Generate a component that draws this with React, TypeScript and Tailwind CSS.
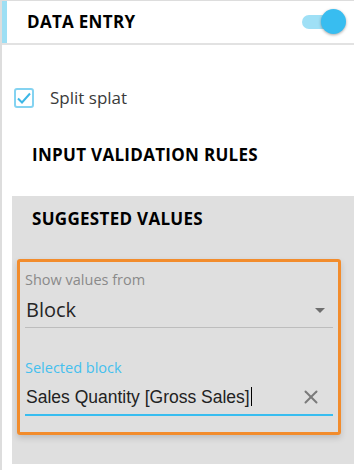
import { X } from "lucide-react";

export default function App() {
  return (
    <div className="h-[470px] w-[354px] overflow-hidden border-l-2 border-t border-[#dddddd] bg-white font-['Open_Sans',sans-serif]">
      {/* header */}
      <div className="flex h-[44px] items-center border-b-2 border-[#e2e2e2]">
        <div className="h-full w-[5px] bg-[#9ddff4]" />
        <h1 className="ml-[20px] text-[17px] font-bold leading-[24px] tracking-[0.3px] text-black">DATA ENTRY</h1>
        <div className="relative ml-auto mr-[8px] h-[26px] w-[44px]">
          <div className="absolute left-0 top-[6px] h-[14px] w-[38px] rounded-full bg-[#9fe0f6]" />
          <div className="absolute left-[19px] top-0 h-[25px] w-[25px] rounded-full bg-[#38bdf0] shadow-[0_1px_3px_rgba(0,0,0,0.35)]" />
        </div>
      </div>

      <div className="flex items-center gap-[16px] pl-[12px] pt-[41px]">
        <div className="flex h-[20px] w-[20px] items-center justify-center rounded-[3px] border-2 border-[#84d3f1]">
          <svg viewBox="0 0 16 16" className="h-[16px] w-[16px]">
            <path d="M2 8.5 L6 12.5 L14 3.5" fill="none" stroke="#3cb7e6" strokeWidth="2" />
          </svg>
        </div>
        <span className="text-[17px] leading-[24px] text-[#3a3a3a]">Split splat</span>
      </div>

      <h2 className="pl-[30px] pt-[33px] text-[17px] font-bold leading-[24px] tracking-[0.3px] text-black">INPUT VALIDATION RULES</h2>

      <div className="ml-[10px] mt-[29px] h-[268px] bg-[#dfdfdf] pl-[5px] pr-[13px] pt-[11px]">
        <h2 className="pl-[15px] text-[17px] font-bold leading-[24px] tracking-[0.3px] text-black">SUGGESTED VALUES</h2>

        <div className="mt-[28px] h-[176px] rounded-[3px] border-[3px] border-[#f28c2c] px-[5px] pt-[8px] shadow-[0_3px_6px_rgba(0,0,0,0.15)]">
          <div className="border-b border-[#bdbdbd] pb-[4px]">
            <div className="text-[14.5px] leading-[20px] text-[#8a8a8a]">Show values from</div>
            <div className="mt-[7px] flex items-center justify-between pl-[1px] pr-[8px]">
              <span className="text-[20px] leading-[26px] text-[#262626]">Block</span>
              <svg viewBox="0 0 10 5" className="h-[5px] w-[10px]">
                <path d="M0 0 L10 0 L5 5 Z" fill="#6e6e6e" />
              </svg>
            </div>
          </div>

          <div className="mt-[30px] border-b-2 border-[#38bdf0] pb-[5px]">
            <div className="text-[14.5px] leading-[20px] text-[#45c0ee]">Selected block</div>
            <div className="mt-[6px] flex items-center justify-between pl-[1px] pr-[11px]">
              <span className="font-['Liberation_Sans',Arial,sans-serif] text-[17.5px] leading-[24px] text-[#222222]">
                Sales Quantity [Gross Sales]<span className="ml-[1px] inline-block h-[19px] w-px translate-y-[3px] bg-black" />
              </span>
              <X className="h-[22px] w-[22px] text-[#7a7a7a]" strokeWidth={2.2} />
            </div>
          </div>
        </div>
      </div>
    </div>
  );
}
